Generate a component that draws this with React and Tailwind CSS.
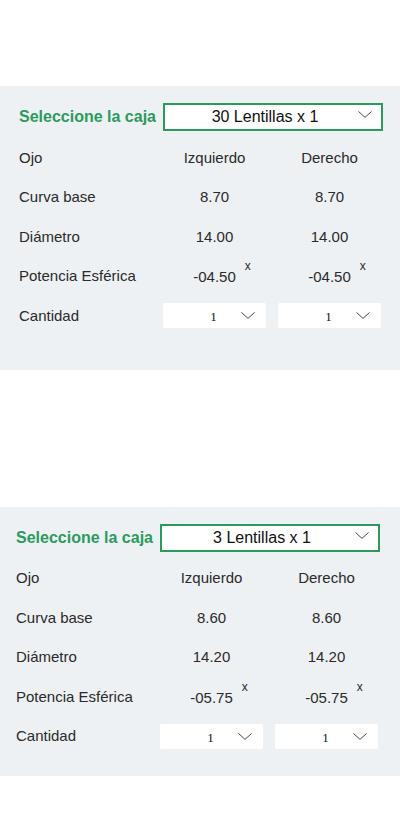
import { useState } from 'react';

const panels = [
  {
    box: '30 Lentillas x 1',
    curva: '8.70',
    diametro: '14.00',
    potencia: '-04.50',
    pad: 'pl-[19px] pb-[34px]',
  },
  {
    box: '3 Lentillas x 1',
    curva: '8.60',
    diametro: '14.20',
    potencia: '-05.75',
    pad: 'pl-[16px] pb-[20px]',
  },
];

function Chevron({ className }) {
  return (
    <svg viewBox="0 0 16 8" className={className} fill="none" stroke="#444" strokeWidth="1.1">
      <path d="M0.5 0.5 L8 7.3 L15.5 0.5" />
    </svg>
  );
}

function Value({ children }) {
  return (
    <div className="flex items-center justify-center">
      <span className="text-[15px] text-[#2a2a2a]">{children}</span>
    </div>
  );
}

function Potencia({ value }) {
  return (
    <div className="flex items-center justify-center">
      <span className="relative text-[15px] text-[#2a2a2a] top-[1px]">
        {value}
        <span className="absolute left-[calc(100%+9px)] top-[-9px] text-[12px] text-[#2a2a2a]">x</span>
      </span>
    </div>
  );
}

function Qty() {
  return (
    <div className="flex items-center">
      <div className="w-full h-[25px] bg-white rounded-[2px] flex items-center pr-[10px]">
        <span className="flex-1 text-center pl-[24px] pt-[2px] text-[13px] text-[#111] [font-family:'Liberation_Serif',serif]">1</span>
        <Chevron className="w-[16px] h-[7px]" />
      </div>
    </div>
  );
}

function Panel({ p }) {
  const [open] = useState(false);
  const label = 'flex items-center text-[15px] text-[#2a2a2a]';
  return (
    <div className={`bg-[#eef1f4] pt-[17px] ${p.pad}`}>
      <div className="flex items-center">
        <div className="w-[144px] text-[16px] font-bold text-[#2b9b5b]">Seleccione la caja</div>
        <div className="w-[220px] h-[28px] border-2 border-[#2b9b5b] bg-white flex items-center pr-[8px]">
          <span className="flex-1 text-center pl-[8px] text-[16px] text-[#111]">{p.box}</span>
          <Chevron className={`w-[16px] h-[7px] -mt-[5px] ${open ? 'rotate-180' : ''}`} />
        </div>
      </div>
      <div className="mt-[7px] grid grid-cols-[132px_103px_103px] gap-x-[12px] auto-rows-[39.5px]">
        <div className={label}>Ojo</div>
        <Value>Izquierdo</Value>
        <Value>Derecho</Value>

        <div className={label}>Curva base</div>
        <Value>{p.curva}</Value>
        <Value>{p.curva}</Value>

        <div className={label}>Diámetro</div>
        <Value>{p.diametro}</Value>
        <Value>{p.diametro}</Value>

        <div className={`${label} whitespace-nowrap`}>Potencia Esférica</div>
        <Potencia value={p.potencia} />
        <Potencia value={p.potencia} />

        <div className={label}>Cantidad</div>
        <Qty />
        <Qty />
      </div>
    </div>
  );
}

export default function App() {
  return (
    <div className="min-h-[822px] bg-white pt-[86px] [font-family:'Liberation_Sans',Arial,sans-serif]">
      <Panel p={panels[0]} />
      <div className="h-[137px]" />
      <Panel p={panels[1]} />
    </div>
  );
}
